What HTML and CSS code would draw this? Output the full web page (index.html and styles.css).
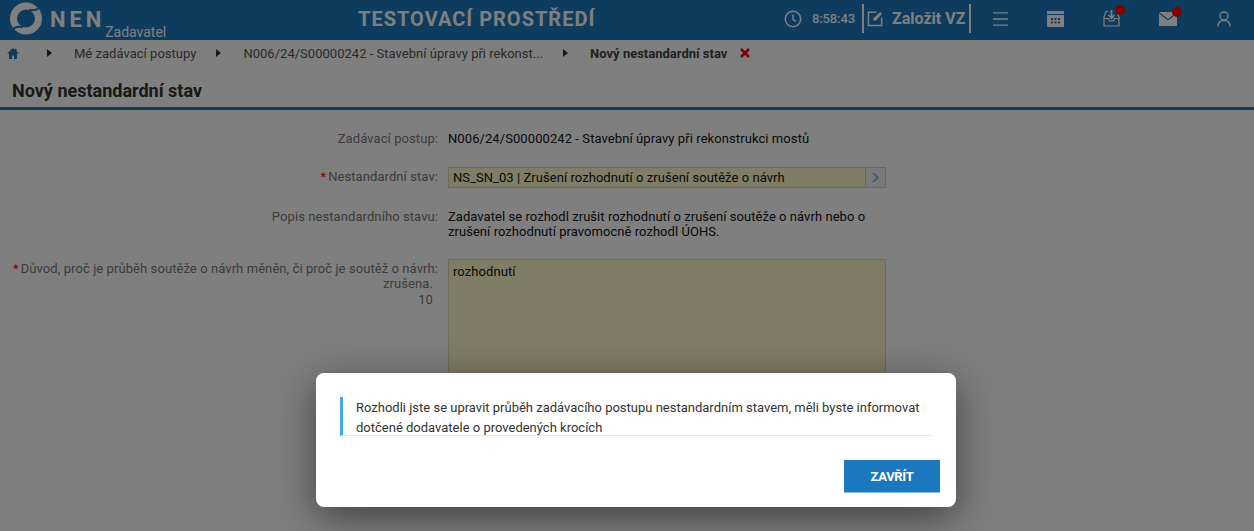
FILE: index.html
```html
<!DOCTYPE html>
<html lang="cs">
<head>
<meta charset="utf-8">
<title>Nový nestandardní stav</title>
<link rel="stylesheet" href="styles.css">
</head>
<body>
<div class="page">
  <header class="topbar">
    <div class="logo">
      <svg class="logo-mark" width="32" height="33" viewBox="0 0 32 32"><circle cx="16" cy="16" r="12.5" fill="none" stroke="#fff" stroke-width="7"/><path d="M19 7.4C24 8.4 28.5 7 31 3" fill="none" stroke="#1c78be" stroke-width="2"/><path d="M13 24.6C8 23.6 3.5 25 1 29" fill="none" stroke="#1c78be" stroke-width="2"/></svg>
      <span class="logo-name">NEN</span>
      <span class="logo-role">Zadavatel</span>
    </div>
    <div class="env">TESTOVACÍ PROSTŘEDÍ</div>
    <div class="tools">
      <svg class="ic-clock" width="18" height="18" viewBox="0 0 18 18" fill="none" stroke="#fff" stroke-width="1.5"><circle cx="9" cy="9" r="7.7"/><path d="M9 4.5V9.5L12 11.5"/></svg>
      <span class="clock">8:58:43</span>
      <div class="create">
        <svg width="17" height="17" viewBox="0 0 18 18" fill="none" stroke="#fff" stroke-width="1.6"><path d="M10 2.5H1.5V16.5H15.5V8"/><path d="M6.5 11.5L7 8.5L14 2L16 4L9.5 11Z" fill="#fff" stroke="none"/></svg>
        <span>Založit VZ</span>
      </div>
      <svg class="ic-menu" width="17" height="16" viewBox="0 0 18 16" stroke="#fff" stroke-width="1.5"><path d="M1 1.5H17M1 8H17M1 14.5H17"/></svg>
      <svg class="ic-cal" width="17" height="16" viewBox="0 0 17 16"><path d="M0 0H17V3H0Z M0 4H17V16H0Z" fill="#fff"/><path d="M4 7H6V9H4ZM7.5 7H9.5V9H7.5ZM11 7H13V9H11ZM4 10.5H6V12.5H4ZM7.5 10.5H9.5V12.5H7.5ZM11 10.5H13V12.5H11Z" fill="#1c78be"/></svg>
      <div class="badged ic-inbox">
        <svg width="17" height="17" viewBox="0 0 17 17" fill="none" stroke="#fff" stroke-width="1.2"><path d="M5 1.5H3L1 7V16H16V7L14 1.5H12"/><path d="M1 8.5H5.5L6.5 11H10.5L11.5 8.5H16"/><path d="M8.5 0V8M5.5 5L8.5 8.2L11.5 5" stroke-width="1.7"/></svg>
        <i class="dot"></i>
      </div>
      <div class="badged ic-mail">
        <svg width="18" height="14" viewBox="0 0 18 14"><path d="M0 0H18L9 7Z M0 1.5L9 8.5L18 1.5V14H0Z" fill="#fff"/></svg>
        <i class="dot"></i>
      </div>
      <svg class="ic-user" width="14" height="16" viewBox="0 0 14 16" fill="none" stroke="#fff" stroke-width="1.4"><circle cx="7" cy="5" r="4"/><path d="M1 15.5C1 11.5 3.5 9.5 7 9.5S13 11.5 13 15.5"/></svg>
    </div>
  </header>

  <nav class="crumbs">
    <svg class="home" width="12" height="11" viewBox="0 0 12 11"><path d="M6 0L8 1.8V0.8H9.6V3.3L12 5.5H10V11H7V7.5H5V11H2V5.5H0Z" fill="#1c78be"/></svg>
    <i class="tri"></i>
    <span>Mé zadávací postupy</span>
    <i class="tri"></i>
    <span>N006/24/S00000242 - Stavební úpravy při rekonst...</span>
    <i class="tri"></i>
    <strong>Nový nestandardní stav</strong>
    <svg class="close" width="10" height="10" viewBox="0 0 10 10" stroke="#f00" stroke-width="2.6"><path d="M1 1L9 9M9 1L1 9"/></svg>
  </nav>

  <h1 class="title">Nový nestandardní stav</h1>

  <form class="form">
    <div class="row row-plain">
      <div class="lbl">Zadávací postup:</div>
      <div class="val">N006/24/S00000242 - Stavební úpravy při rekonstrukci mostů</div>
    </div>
    <div class="row row-select">
      <div class="lbl"><b>*</b>Nestandardní stav:</div>
      <div class="select">
        <span>NS_SN_03 | Zrušení rozhodnutí o zrušení soutěže o návrh</span>
        <div class="select-btn"><svg width="7" height="11" viewBox="0 0 7 11" fill="none" stroke="#6aa6d6" stroke-width="1.3"><path d="M1 1L6 5.5L1 10"/></svg></div>
      </div>
    </div>
    <div class="row row-desc">
      <div class="lbl">Popis nestandardního stavu:</div>
      <div class="val">Zadavatel se rozhodl zrušit rozhodnutí o zrušení soutěže o návrh nebo o zrušení rozhodnutí pravomocně rozhodl ÚOHS.</div>
    </div>
    <div class="row row-area">
      <div class="lbl"><b>*</b>Důvod, proč je průběh soutěže o návrh měněn, či proč je soutěž o návrh:
        <div class="lbl-sub">zrušena.<br>10</div>
      </div>
      <div class="area">rozhodnutí</div>
    </div>
  </form>
</div>

<div class="overlay">
  <div class="dialog">
    <div class="note">Rozhodli jste se upravit průběh zadávacího postupu nestandardním stavem, měli byste informovat dotčené dodavatele o provedených krocích</div>
    <div class="actions"><button type="button" class="btn">ZAVŘÍT</button></div>
  </div>
</div>
</body>
</html>
```
FILE: styles.css
```css
* { box-sizing: border-box; }
html, body { margin: 0; height: 100%; }
body { font-family: Roboto, "Liberation Sans", sans-serif; background: #fff; overflow: hidden; }
.page { height: 531px; overflow: hidden; position: relative; }

.topbar { height: 40px; background: #1c78be; display: flex; align-items: center; color: #fff; }
.logo { width: 340px; display: flex; align-items: flex-end; height: 40px; padding-left: 10px; flex: none; }
.logo-mark { flex: none; margin: 0 0 5px 0; }
.logo-name { font-size: 22px; font-weight: 700; letter-spacing: 3.9px; margin: 0 0 9px 8px; line-height: 22px; }
.logo-role { font-size: 14px; line-height: 15px; margin-left: 0; }
.env { width: 273px; font-size: 20px; font-weight: 700; letter-spacing: 1px; flex: none; margin-left: 18px; padding-bottom: 3px; }
.tools { display: flex; align-items: center; height: 40px; margin-left: 153px; padding-bottom: 3px; flex: none; }
.clock { font-size: 13px; font-weight: 500; letter-spacing: -.12px; margin-left: 10px; width: 41px; }
.create { display: flex; align-items: center; gap: 8px; height: 29px; margin-left: 9px; padding: 0 4px 0 3px; border-left: 2px solid #fff; border-right: 2px solid #fff; font-size: 16px; font-weight: 700; }
.ic-menu { margin-left: 21px; flex: none; }
.ic-cal { margin-left: 38px; flex: none; }
.badged { position: relative; display: flex; }
.ic-inbox { margin-left: 39px; }
.ic-mail { margin-left: 39px; }
.ic-user { margin-left: 40px; flex: none; }
.dot { position: absolute; width: 10px; height: 10px; border-radius: 50%; background: #f00; top: -5px; right: -5px; }

.crumbs { height: 26px; background: #fefefe; display: flex; align-items: center; font-size: 13px; color: #555; padding-left: 7px; }
.crumbs strong { font-weight: 700; color: #444; margin-left: 22px; }
.home { flex: none; }
.tri { width: 0; height: 0; border-left: 5px solid #333; border-top: 4px solid transparent; border-bottom: 4px solid transparent; flex: none; }
.crumbs .tri:nth-of-type(1) { margin-left: 28px; }
.crumbs span { margin-left: 22px; letter-spacing: .02px; }
.crumbs span + .tri { margin-left: 20px; }
.close { margin-left: 13px; flex: none; }

.title { height: 44px; margin: 0; padding: 14px 0 0 12px; font-size: 18px; line-height: 22px; font-weight: 700; color: #333; border-bottom: 3px solid #1c78be; }

.form { padding-top: 21px; font-size: 13px; letter-spacing: .08px; }
.row { display: flex; }
.lbl { width: 438px; text-align: right; color: #777; flex: none; padding-left: 10px; line-height: 15.6px; }
.lbl b { color: #f00; font-weight: 400; margin-right: 2px; }
.lbl-sub { padding-right: 5px; }
.val { margin-left: 10px; color: #111; width: 438px; line-height: 15.6px; }
.row-desc .val { letter-spacing: .05px; }
.row-select { margin-top: 20px; }
.row-select .lbl { padding-top: 2px; }
.row-desc { margin-top: 21px; }
.row-area { margin-top: 19px; }
.row-area .lbl { padding-top: 2px; }
.select { margin-left: 10px; width: 438px; height: 21px; display: flex; align-items: center; background: #fffacd; border: 1px solid #d9d9b8; color: #111; letter-spacing: .05px; }
.select span { flex: 1; padding-left: 4px; }
.select-btn { width: 20px; height: 19px; border-left: 1px solid #c9d3dd; background: #eef2f6; display: flex; align-items: center; justify-content: center; }
.area { margin-left: 10px; width: 438px; height: 200px; background: #fffacd; border: 1px solid #d9d9b8; padding: 4px; color: #111; line-height: 16px; }

.overlay { position: absolute; inset: 0; background: rgba(0, 0, 0, .5); }
.dialog { position: absolute; left: 316px; top: 373px; width: 640px; height: 134px; background: #fff; border-radius: 8px; box-shadow: 0 10px 40px rgba(0, 0, 0, .5); padding: 24px 24px 0 24px; }
.note { border-left: 3px solid #3fa9f0; border-bottom: 1px solid #dcebf5; padding: 1px 0 0 13px; height: 39px; font-size: 13px; line-height: 19.5px; color: #333; }
.actions { display: flex; justify-content: flex-end; margin-right: -8px; margin-top: 24px; }
.btn { width: 96px; height: 33px; border: 0; border-top: 1px solid #1c78be; border-bottom: 1px solid #8dbbdf; background: #1c78be; color: #fff; font: 700 13px Roboto, sans-serif; letter-spacing: -.3px; padding: 0; }
```
